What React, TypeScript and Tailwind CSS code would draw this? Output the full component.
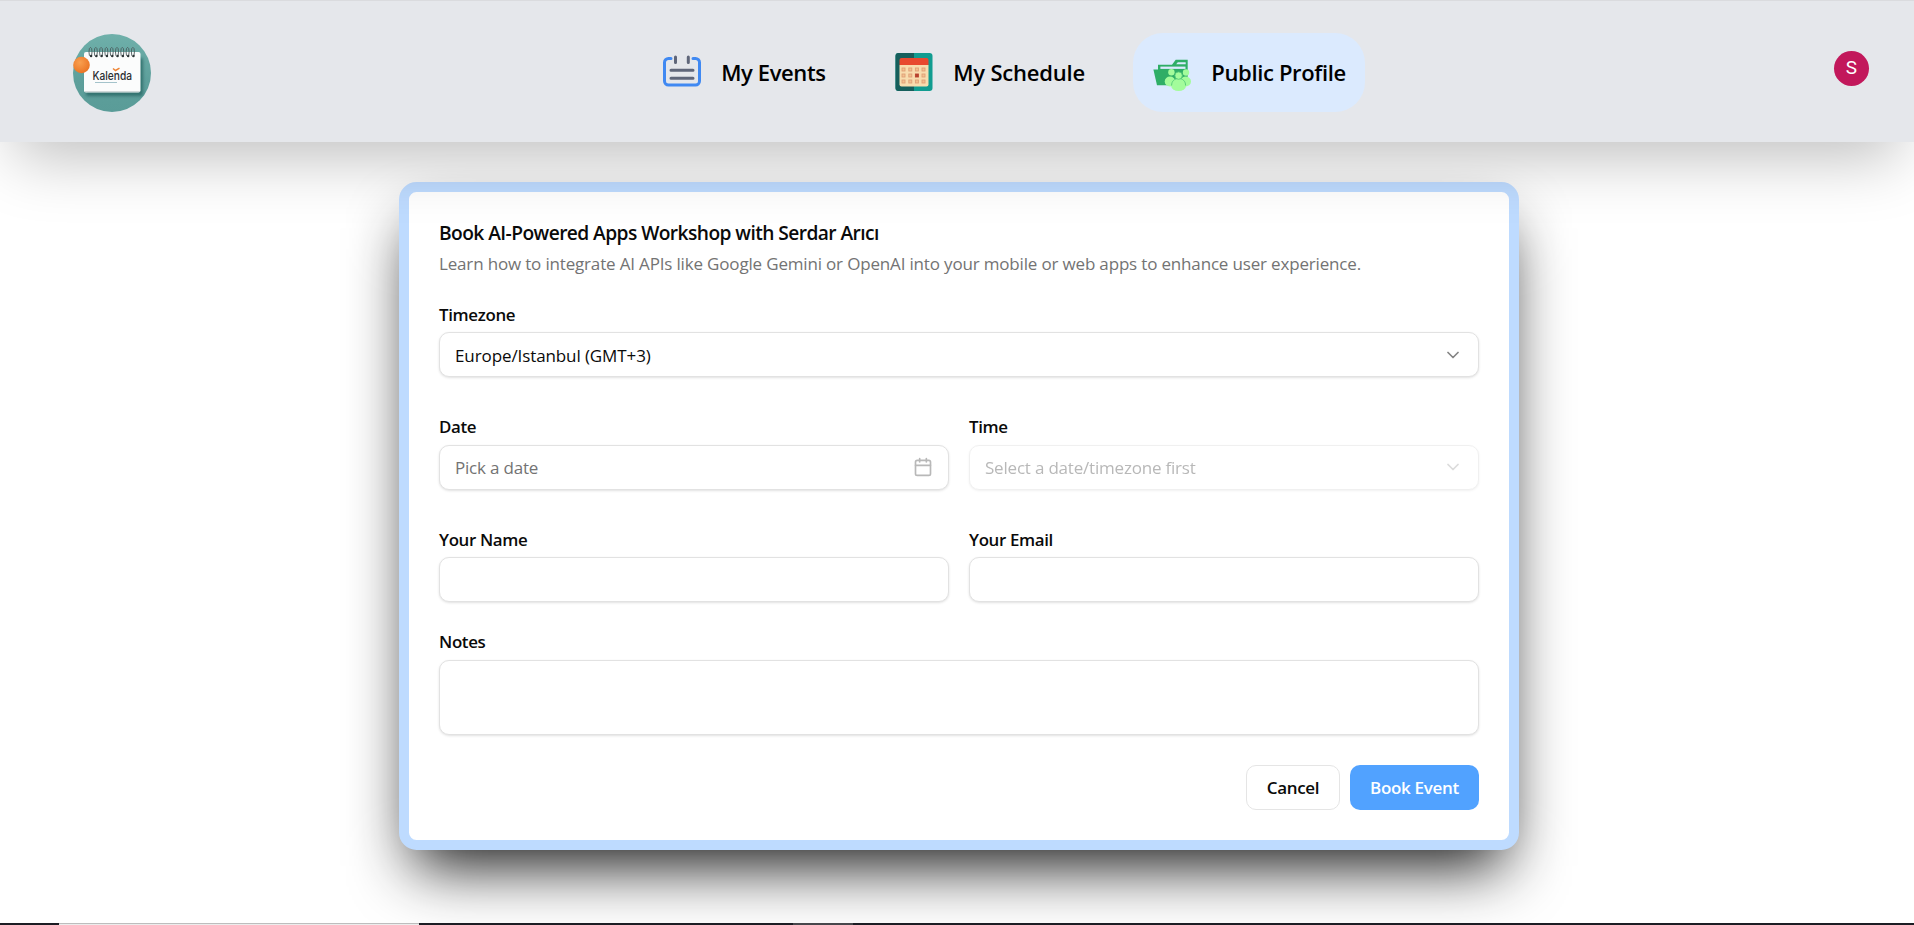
import type { ReactNode } from "react";
import { Calendar, ChevronDown } from "lucide-react";

function Logo() {
  return (
    <svg viewBox="0 0 78 78" className="mt-[3px] size-[78px]" aria-label="Kalenda">
      <defs>
        <linearGradient id="teal" x1="0" y1="0" x2="0" y2="1">
          <stop offset="0" stopColor="#6fb0aa" />
          <stop offset="0.6" stopColor="#5d9f9b" />
          <stop offset="1" stopColor="#5a9c98" />
        </linearGradient>
        <radialGradient id="ball" cx="0.4" cy="0.35" r="0.7">
          <stop offset="0" stopColor="#f9a050" />
          <stop offset="1" stopColor="#ea7222" />
        </radialGradient>
        <filter id="soft" x="-20%" y="-20%" width="140%" height="150%">
          <feGaussianBlur stdDeviation="1.8" />
        </filter>
        <clipPath id="disc">
          <circle cx="39" cy="39" r="39" />
        </clipPath>
      </defs>
      <g clipPath="url(#disc)">
        <rect width="78" height="78" fill="url(#teal)" />
        <rect x="13" y="24" width="57" height="38" rx="2" fill="#23605e" opacity="0.7" filter="url(#soft)" />
      </g>
      <rect x="11" y="18" width="56.500" height="40.500" rx="2" fill="#fbfcfc" />
      <path d="M11.500 57.500h55.500" stroke="#cfd8d8" strokeWidth="1.200" />
      {[17.5, 22.8, 28.1, 33.4, 38.7, 44, 49.3, 54.6, 59.9].map((x) => (
        <g key={x}>
          <ellipse cx={x} cy="18" rx="1.500" ry="4.600" fill="none" stroke="#4b5a5b" strokeWidth="0.900" />
          <circle cx={x + 0.6} cy="22" r="1.200" fill="#2d3536" />
        </g>
      ))}
      <circle cx="8.500" cy="31" r="8.300" fill="url(#ball)" />
      <text x="19.500" y="45.500" fontFamily="Inter, sans-serif" fontSize="12.300" fontWeight="500" fill="#2a2e31" textLength="39.500" lengthAdjust="spacingAndGlyphs">
        Kalenda
      </text>
      <path d="M40 34.500l2.500 2 4-2.300" stroke="#ee8434" strokeWidth="1.500" fill="none" />
      <path d="M22 48.500h22" stroke="#8fb6c0" strokeWidth="1" opacity="0.8" />
    </svg>
  );
}

function EventsIcon() {
  return (
    <svg viewBox="0 0 38 38" className="size-[38px] shrink-0" fill="none" strokeLinecap="round">
      <path d="M8 5.500H5.500a4 4 0 0 0-4 4V28a4 4 0 0 0 4 4h27a4 4 0 0 0 4-4V9.500a4 4 0 0 0-4-4H30" stroke="#4089f2" strokeWidth="3" />
      <path d="M12.500 4v5.500M25.300 4v5.500M8 17.300h22M8 25.300h22" stroke="#5f6679" strokeWidth="3" />
    </svg>
  );
}

function ScheduleIcon() {
  const cols = [7, 13.8, 20.4, 27];
  const rows = [15, 21, 27];
  return (
    <svg viewBox="0 0 38 38" className="size-[38px] shrink-0">
      <rect x="0.500" width="37" height="38" rx="3" fill="#119c90" />
      <path d="M3.500 0H19v38H3.500a3 3 0 0 1-3-3V3a3 3 0 0 1 3-3z" fill="#165f5c" />
      <path d="M4.500 12h29v19.500a2 2 0 0 1-2 2h-25a2 2 0 0 1-2-2z" fill="#f8dcae" />
      <path d="M4.500 12V7a2 2 0 0 1 2-2h25a2 2 0 0 1 2 2v5z" fill="#e8492f" />
      {rows.map((y) =>
        cols.map((x) => (
          <rect key={`${x}-${y}`} x={x} y={y} width="3" height="3" fill={x === 20.4 && y === 21 ? "#b9432f" : "#f3c18f"} stroke={x === 20.4 && y === 21 ? "#b9432f" : "#dfa078"} strokeWidth="0.900" />
        )),
      )}
    </svg>
  );
}

function ProfileIcon() {
  return (
    <svg viewBox="0 0 38 38" className="size-[38px] shrink-0 overflow-visible">
      <path d="M5 11.800h14l3.700-5h12V30H5z" fill="#2fae66" />
      <path d="M23.200 11.300l1.600-2.100h7.900v2.100z" fill="#dbeafe" />
      <path d="M7.400 13.600H32.500v2.300H7.400z" fill="#dbeafe" />
      <path d="M0.400 16.500H30v15.700H4z" fill="#2fae66" />
      <g fill="#a3fc9b">
        <circle cx="18.400" cy="19.300" r="3.200" />
        <circle cx="33" cy="19.500" r="3.200" />
        <ellipse cx="17" cy="28.500" rx="5.300" ry="5" />
        <ellipse cx="32.700" cy="28.500" rx="5.300" ry="5" />
        <ellipse cx="25.600" cy="32.500" rx="7.500" ry="5.600" />
      </g>
      <path d="M18.600 32.500c0-4.500 3-7 7-7s7 2.500 7 7" fill="#a3fc9b" stroke="#52c878" strokeWidth="0.900" />
      <circle cx="25.600" cy="22.600" r="3.700" fill="#a3fc9b" stroke="#52c878" strokeWidth="0.900" />
    </svg>
  );
}

function NavItem({ icon, label, active = false }: { icon: ReactNode; label: ReactNode; active?: boolean }) {
  return (
    <a className={`flex h-[79px] items-center gap-5 rounded-[30px] px-5 ${active ? "bg-blue-100" : ""}`}>
      {icon}
      {label}
    </a>
  );
}

function Label({ children }: { children: ReactNode }) {
  return <span className="block h-[17.5px] text-[16.900px] leading-[19.500px] font-semibold tracking-[-0.35px] whitespace-nowrap">{children}</span>;
}

const field = "flex h-[45px] items-center justify-between rounded-[10px] border border-[#e2e2e2] bg-white px-[15px] text-[17px] shadow-[0_1px_2.5px_rgba(0,0,0,0.12)]";

export default function App() {
  return (
    <div className="flex h-[925px] w-full flex-col overflow-hidden bg-white font-['Open_Sans','Noto_Sans',sans-serif] text-[#0a0a0a]">
      <header className="relative z-10 flex h-[142px] shrink-0 items-center justify-between border-t border-[#dadbde] bg-gray-200 pr-[45px] pl-[72.500px] shadow-[0_31px_62px_-15px_rgba(0,0,0,0.25)]">
        <Logo />
        <nav className="mt-px ml-[24px] flex gap-[30px] text-[22px] font-semibold text-black">
          <NavItem icon={<EventsIcon />} label={<span className="w-[104px] tracking-[-0.400px] whitespace-nowrap">My Events</span>} />
          <NavItem icon={<ScheduleIcon />} label={<span className="w-[130px] tracking-[-0.200px] whitespace-nowrap">My Schedule</span>} />
          <NavItem active icon={<ProfileIcon />} label={<span className="w-[134px] tracking-[-0.350px] whitespace-nowrap">Public Profile</span>} />
        </nav>
        <div className="mb-[7px] flex size-[35px] items-center justify-center rounded-full bg-[#c2185b] font-[Roboto,sans-serif] text-[19px] text-white">S</div>
      </header>

      <main className="flex min-h-0 flex-1 justify-center pt-10 pr-0 pl-1">
        <section className="flex h-[668px] w-[1120px] flex-col rounded-[17.500px] border-[10px] border-[#bedbff] bg-white p-[30px] shadow-[0_31px_62px_-15px_#171717]">
          <h1 className="h-5 text-[19.200px] leading-[22px] font-semibold tracking-[-0.570px] whitespace-nowrap">Book AI-Powered Apps Workshop with Serdar Arıcı</h1>
          <p className="mt-[7.500px] h-[25px] text-[17px] leading-[27.500px] tracking-[-0.170px] whitespace-nowrap text-[#737373]">
            Learn how to integrate AI APIs like Google Gemini or OpenAI into your mobile or web apps to enhance user experience.
          </p>

          <form className="mt-[30px] flex flex-col">
            <div className="flex flex-col gap-2.5">
              <Label>Timezone</Label>
              <div className={field}>
                <span className="pt-[2px] tracking-[-0.100px]">Europe/Istanbul (GMT+3)</span>
                <ChevronDown className="size-5 opacity-50" />
              </div>
            </div>

            <div className="mt-10 grid grid-cols-2 gap-5">
              <div className="flex flex-col gap-2.5">
                <Label>Date</Label>
                <div className={`${field} text-[#737373]`}>
                  <span className="pt-[2px] tracking-[-0.200px]">Pick a date</span>
                  <Calendar className="size-5 opacity-50" />
                </div>
              </div>
              <div className="flex flex-col gap-2.5">
                <Label>Time</Label>
                <div className={`${field} text-[#737373] opacity-50`}>
                  <span className="pt-[2px] tracking-[-0.200px]">Select a date/timezone first</span>
                  <ChevronDown className="size-5 opacity-50" />
                </div>
              </div>
            </div>

            <div className="mt-10 grid grid-cols-2 gap-5">
              <div className="flex flex-col gap-2.5">
                <Label>Your Name</Label>
                <div className={field} />
              </div>
              <div className="flex flex-col gap-2.5">
                <Label>Your Email</Label>
                <div className={field} />
              </div>
            </div>

            <div className="mt-[30px] flex flex-col gap-2.5">
              <Label>Notes</Label>
              <div className="h-[75px] rounded-[10px] border border-[#e2e2e2] bg-white shadow-[0_1px_2.5px_rgba(0,0,0,0.12)]" />
            </div>

            <div className="mt-[30px] flex justify-end gap-2.5 text-[17px] font-semibold tracking-[-0.300px]">
              <button type="button" className="h-[45px] w-[94px] rounded-[10px] border border-[#e5e5e5] bg-white pt-[2px] whitespace-nowrap">Cancel</button>
              <button type="button" className="h-[45px] w-[129px] rounded-[10px] bg-[#51a2ff] pt-[2px] whitespace-nowrap text-white">Book Event</button>
            </div>
          </form>
        </section>
      </main>

      <footer className="relative z-20 flex h-0.5 shrink-0 bg-[#1c1d24]">
        <div className="ml-[59px] h-0.5 w-[360px] border-t border-[#bdbdbd] bg-[#ececec]" />
        <div className="ml-[374px] h-0.5 w-[60px] bg-[#47474c]" />
      </footer>
    </div>
  );
}
